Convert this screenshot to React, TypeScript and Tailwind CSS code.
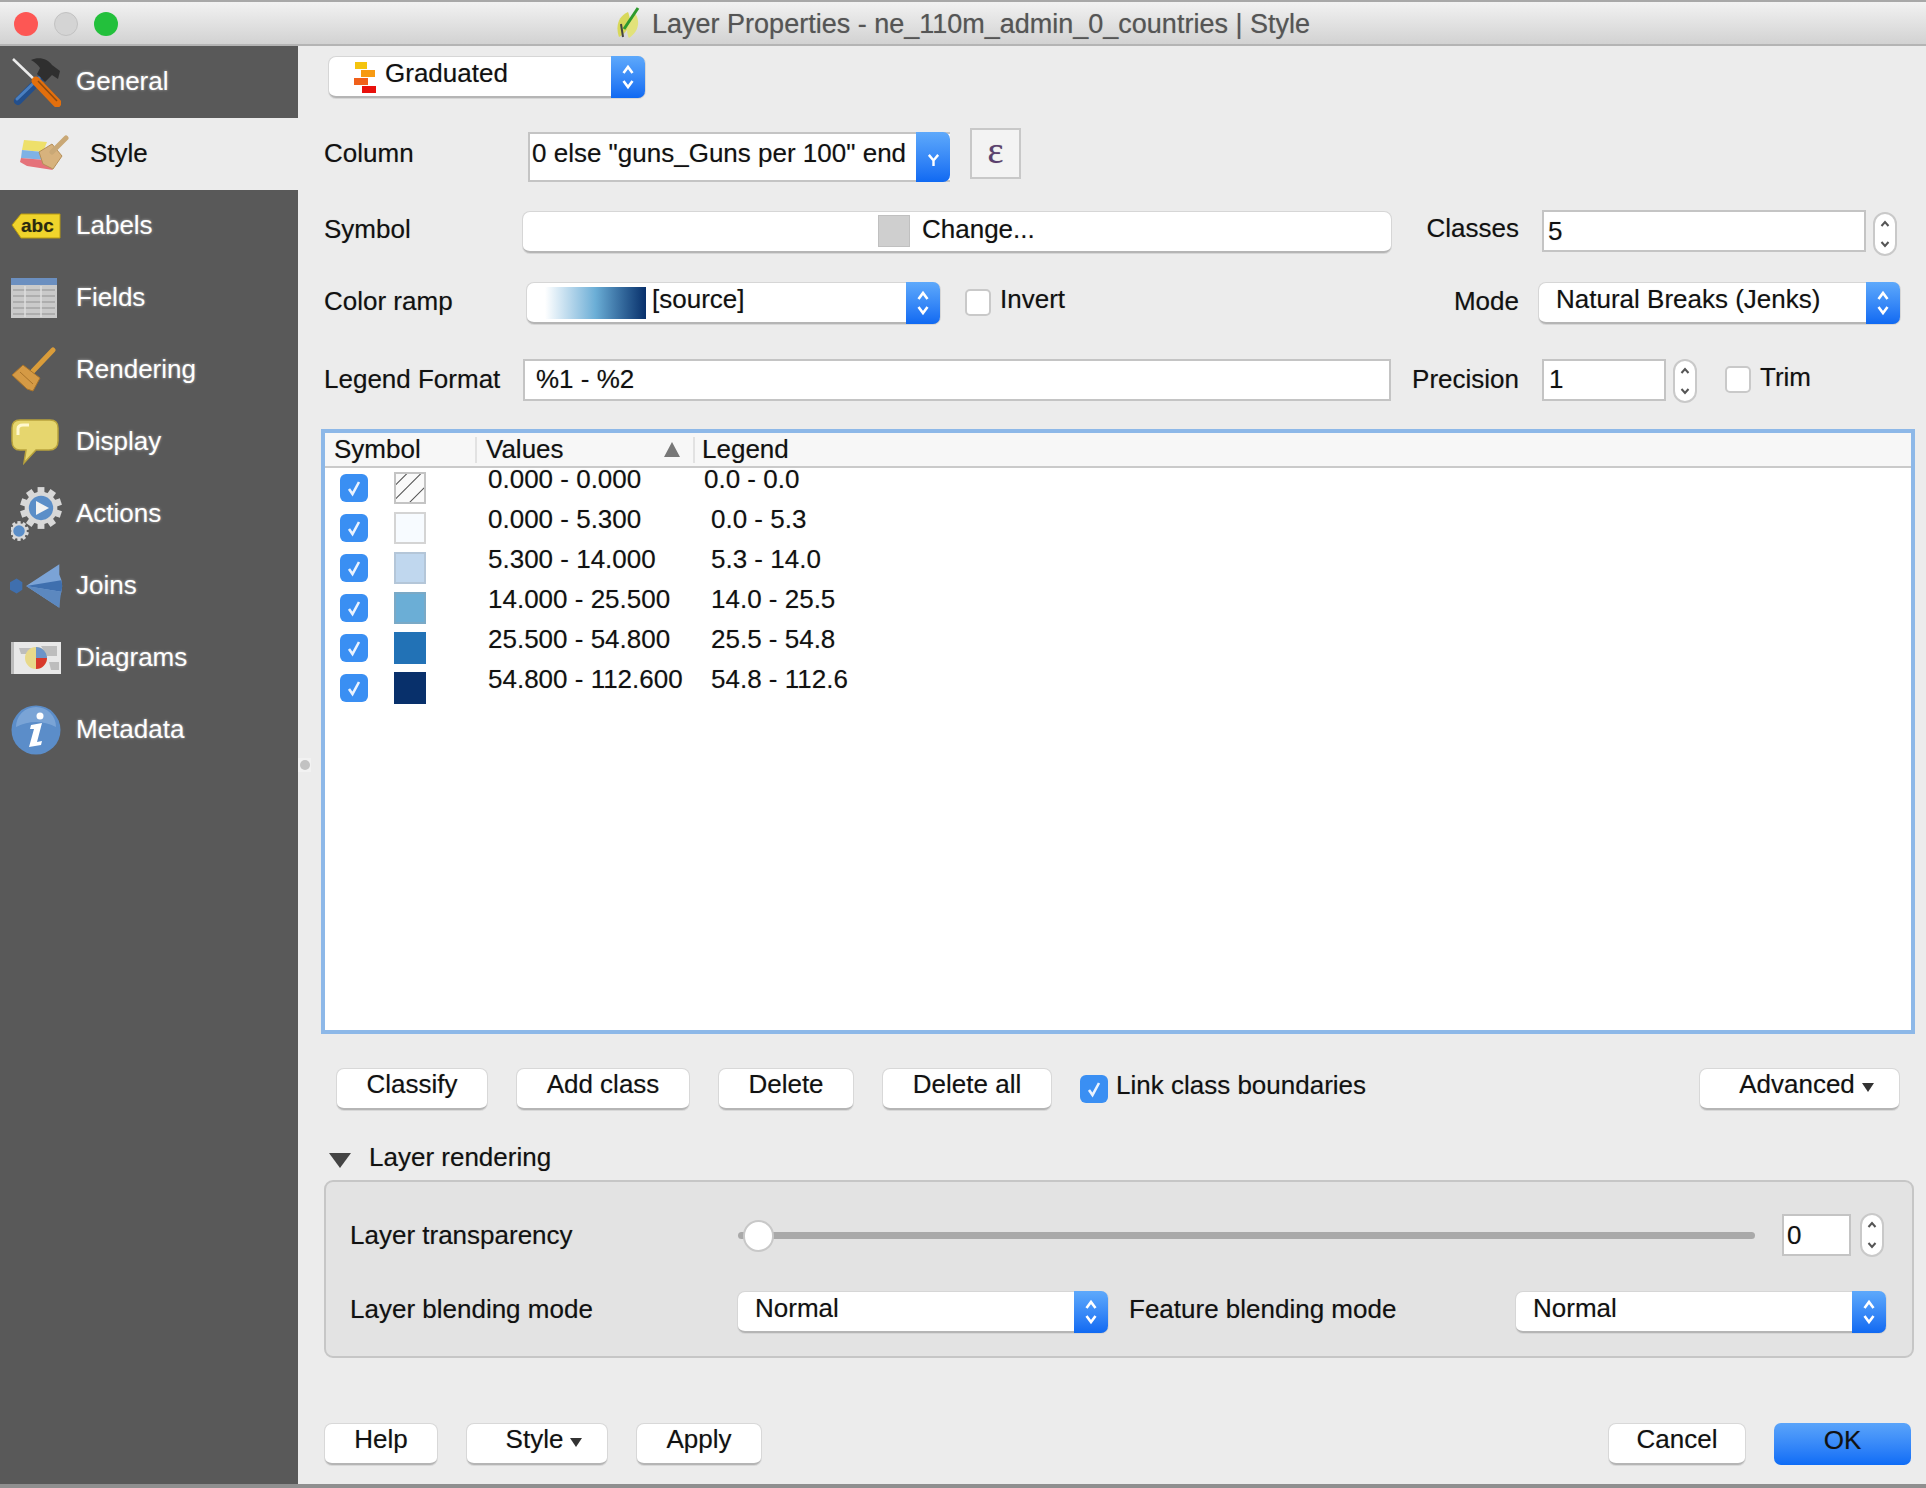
import type { ReactNode } from "react";

const sideItems = [
  { name: "General", icon: <GeneralIcon /> },
  { name: "Style", icon: <StyleIcon />, active: true },
  { name: "Labels", icon: <LabelsIcon /> },
  { name: "Fields", icon: <FieldsIcon /> },
  { name: "Rendering", icon: <BrushIcon /> },
  { name: "Display", icon: <DisplayIcon /> },
  { name: "Actions", icon: <ActionsIcon /> },
  { name: "Joins", icon: <JoinsIcon /> },
  { name: "Diagrams", icon: <DiagramsIcon /> },
  { name: "Metadata", icon: <MetadataIcon /> },
];

const classes = [
  { values: "0.000 - 0.000", legend: "0.0 - 0.0", swatch: "hatch", first: true },
  { values: "0.000 - 5.300", legend: "0.0 - 5.3", swatch: "bg-[#f7fbff] border-2 border-[#d4d4d4]" },
  { values: "5.300 - 14.000", legend: "5.3 - 14.0", swatch: "bg-[#c0d7ee] border-2 border-[#b4c6d8]" },
  { values: "14.000 - 25.500", legend: "14.0 - 25.5", swatch: "bg-[#6baed6] border-2 border-[#7aa9c6]" },
  { values: "25.500 - 54.800", legend: "25.5 - 54.8", swatch: "bg-[#2272b6]" },
  { values: "54.800 - 112.600", legend: "54.8 - 112.6", swatch: "bg-[#08306b]" },
];

function GeneralIcon() {
  return (
    <svg viewBox="0 0 50 50" className="w-[50px] h-[50px]">
      <line x1="31" y1="20" x2="7" y2="44" stroke="#234f8c" strokeWidth="8" strokeLinecap="round" />
      <line x1="29" y1="20" x2="6" y2="42" stroke="#4a7fc0" strokeWidth="3" strokeLinecap="round" />
      <path d="M20 3 C28 -1 37 2 41 8 L49 14 L47 22 L41 18 L34 25 L26 17 L29 11 C27 8 24 5 20 3Z" fill="#2f2f2f" />
      <line x1="2" y1="2" x2="26" y2="25" stroke="#ececec" strokeWidth="2.5" />
      <line x1="25" y1="24" x2="46" y2="46" stroke="#e36f0c" strokeWidth="9" strokeLinecap="round" />
      <line x1="27" y1="24" x2="46" y2="44" stroke="#8c4a10" strokeWidth="1.5" />
    </svg>
  );
}

function StyleIcon() {
  return (
    <svg viewBox="0 0 50 40" className="w-[50px] h-[40px]">
      <polygon points="5,6 28,8 24,18 3,16" fill="#eee06a" />
      <polygon points="3,16 24,18 26,26 2,24" fill="#7fb2e5" />
      <polygon points="2,24 26,26 34,36 8,32 1,28" fill="#e5727a" />
      <path d="M20 18 L33 10 L43 22 L34 35 L24 30 Z" fill="#d7b27d" stroke="#b58f58" strokeWidth="1" />
      <line x1="33" y1="18" x2="47" y2="4" stroke="#c9a876" strokeWidth="5" strokeLinecap="round" />
    </svg>
  );
}

function LabelsIcon() {
  return (
    <svg viewBox="0 0 50 30" className="w-[50px] h-[30px]">
      <path d="M1 14 L10 3 H49 V27 H10 Z" fill="#f0d42c" stroke="#b89a10" strokeWidth="1" />
      <text x="10" y="21" fontSize="19" fontWeight="700" fontFamily="Liberation Sans, sans-serif" fill="#2a2a10">abc</text>
    </svg>
  );
}

function FieldsIcon() {
  return (
    <svg viewBox="0 0 46 40" className="w-[46px] h-[40px]">
      <rect x="0" y="0" width="46" height="40" fill="#cacaca" />
      <rect x="0" y="0" width="46" height="7" fill="#6b8fc0" />
      {[12, 18, 24, 30, 36].map((y) => (
        <line key={y} x1="2" y1={y} x2="44" y2={y} stroke="#a4a4a4" strokeWidth="1.5" />
      ))}
      {[14, 30].map((x) => (
        <line key={x} x1={x} y1="8" x2={x} y2="39" stroke="#dedede" strokeWidth="1.5" />
      ))}
    </svg>
  );
}

function BrushIcon() {
  return (
    <svg viewBox="0 0 46 46" className="w-[46px] h-[46px]">
      <line x1="22" y1="24" x2="42" y2="3" stroke="#d99c3a" strokeWidth="5" strokeLinecap="round" />
      <path d="M12 18 L29 31 L22 44 L16 42 L1 28 Z" fill="#d59a45" stroke="#a8732a" strokeWidth="1" />
      <line x1="9" y1="25" x2="22" y2="37" stroke="#a8732a" strokeWidth="1" />
    </svg>
  );
}

function DisplayIcon() {
  return (
    <svg viewBox="0 0 48 46" className="w-[48px] h-[46px]">
      <path d="M9 1 H39 Q47 1 47 9 V22 Q47 31 38 31 H25 L13 44 L15 31 H9 Q1 31 1 22 V9 Q1 1 9 1Z" fill="#e6d66e" stroke="#b8a23c" strokeWidth="1.5" />
      <path d="M7 16 V10 Q7 6 12 6 H18" fill="none" stroke="#fff8cf" strokeWidth="3" />
    </svg>
  );
}

function Gear({ cx, cy, r, hub }: { cx: number; cy: number; r: number; hub: string }) {
  const teeth = Array.from({ length: 10 }, (_, i) => i * 36);
  return (
    <g>
      {teeth.map((a) => (
        <rect
          key={a}
          x={cx - r * 0.18}
          y={cy - r * 1.1}
          width={r * 0.36}
          height={r * 0.4}
          fill="#d8d8d8"
          transform={`rotate(${a} ${cx} ${cy})`}
        />
      ))}
      <circle cx={cx} cy={cy} r={r * 0.86} fill="#d8d8d8" />
      <circle cx={cx} cy={cy} r={r * 0.64} fill={hub} />
    </g>
  );
}

function ActionsIcon() {
  return (
    <svg viewBox="0 0 54 54" className="w-[54px] h-[54px]">
      <Gear cx={30} cy={21} r={19} hub="#5b8ec8" />
      <polygon points="25,14 38,21 25,28" fill="#f2f2f2" />
      <Gear cx={8} cy={44} r={9} hub="#5b8ec8" />
    </svg>
  );
}

function JoinsIcon() {
  return (
    <svg viewBox="0 0 58 48" className="w-[55px] h-[46px] -ml-[1px]">
      <polygon points="0,20 7,16 13,20 13,28 7,32 0,28" fill="#3f6fae" />
      <path d="M17 24 L52 1 V12 Q58 24 52 36 V47 Z" fill="#7ba3d6" />
      <path d="M17 24 L54 18 Q56 24 54 30 Z" fill="#3f6fae" />
      <path d="M17 24 L54 30 Q53 36 52 47 Z" fill="#5c88bf" />
    </svg>
  );
}

function DiagramsIcon() {
  return (
    <svg viewBox="0 0 50 32" className="w-[50px] h-[32px]">
      <rect x="0" y="0" width="50" height="32" fill="#e8e8e8" />
      <rect x="0" y="0" width="3" height="32" fill="#bcbcbc" />
      <path d="M8 6 H20 V12 H10 Z M30 4 H46 V14 H36 Z M38 20 H48 V28 H40 Z" fill="#bdbdbd" />
      <circle cx="25" cy="16" r="11" fill="#e8d98a" />
      <path d="M25 16 L25 5 A11 11 0 0 1 36 16 Z" fill="#6c94c9" />
      <path d="M25 16 L36 16 A11 11 0 0 1 25 27 Z" fill="#d8392c" />
    </svg>
  );
}

function MetadataIcon() {
  return (
    <svg viewBox="0 0 50 50" className="w-[50px] h-[50px]">
      <circle cx="25" cy="25" r="24.5" fill="#5b8dc9" />
      <path d="M5 22 A20 20 0 0 1 45 22 Q25 12 5 22Z" fill="#8fb4e0" opacity="0.6" />
      <circle cx="29" cy="11" r="3.5" fill="#fff" />
      <path d="M20 20 L31 18 L26 37 L31 36 L30 40 L18 42 L23 24 L19 24 Z" fill="#fff" />
    </svg>
  );
}

function Sidebar() {
  return (
    <div className="w-[298px] bg-[#595959] flex flex-col shrink-0">
      {sideItems.map((item) => (
        <div
          key={item.name}
          className={item.active ? "h-[72px] bg-[#ececec] flex items-center" : "h-[72px] flex items-center"}
        >
          <div className={item.active ? "w-[90px] pl-[19px] flex items-center" : "w-[76px] pl-[11px] flex items-center"}>
            {item.icon}
          </div>
          <span
            className={
              item.active
                ? "text-[26px] text-[#111] pb-[2px]"
                : "text-[26px] text-white pb-[2px] [text-shadow:0_0_3px_rgba(255,255,255,0.55)]"
            }
          >
            {item.name}
          </span>
        </div>
      ))}
    </div>
  );
}

function Updown({ className }: { className: string }) {
  return (
    <svg viewBox="0 0 14 26" className={className} fill="none" strokeWidth="2.6">
      <path d="M2.5 9 L7 3 L11.5 9" />
      <path d="M2.5 17 L7 23 L11.5 17" />
    </svg>
  );
}

function Combo({ width, children, textClass }: { width: string; children: ReactNode; textClass?: string }) {
  return (
    <div className={`${width} h-[41px] flex rounded-[7px] bg-white border-b-2 border-[#b5b5b5] shadow-[0_0_0_1px_#d6d6d6] shrink-0`}>
      <div className={`flex-1 flex items-center overflow-hidden pb-[6px] ${textClass ?? ""}`}>{children}</div>
      <div className="w-[34px] -mb-[2px] -mt-[1px] rounded-r-[7px] bg-gradient-to-b from-[#5ea9fb] to-[#0f69f2] flex items-center justify-center">
        <Updown className="w-[14px] h-[26px] stroke-white" />
      </div>
    </div>
  );
}

function Spin({ className }: { className?: string }) {
  return (
    <div className={`w-[24px] h-[44px] rounded-full bg-white border-2 border-[#c9c9c9] flex items-center justify-center shrink-0 ${className ?? ""}`}>
      <svg viewBox="0 0 12 30" className="w-[12px] h-[30px] stroke-[#555]" fill="none" strokeWidth="2">
        <path d="M2.5 7 L6 3 L9.5 7" />
        <path d="M2.5 23 L6 27 L9.5 23" />
      </svg>
    </div>
  );
}

function TextBox({ className, value }: { className: string; value: string }) {
  return (
    <div className={`h-[42px] bg-white border-2 border-[#c4c4c4] flex items-center text-[26px] shrink-0 ${className}`}>
      {value}
    </div>
  );
}

function BlueCheck({ className }: { className?: string }) {
  return (
    <div className={`w-[28px] h-[28px] rounded-[6px] bg-[#3a8ff3] flex items-center justify-center shrink-0 ${className ?? ""}`}>
      <svg viewBox="0 0 20 20" className="w-[20px] h-[20px]" fill="none" stroke="#eaf3ff" strokeWidth="2.6">
        <path d="M5 11 L8.5 16 L15 4" />
      </svg>
    </div>
  );
}

function EmptyCheck() {
  return <div className="w-[26px] h-[27px] rounded-[5px] bg-white border-2 border-[#c9c9c9] shrink-0" />;
}

function Btn({ className, children }: { className: string; children: ReactNode }) {
  return (
    <div className={`h-[41px] rounded-[7px] bg-white border-b-2 border-[#b5b5b5] shadow-[0_0_0_1px_#d8d8d8] flex items-center justify-center pb-[8px] text-[26px] shrink-0 ${className}`}>
      {children}
    </div>
  );
}

function Caret() {
  return <span className="ml-[7px] mt-[6px] w-0 h-0 border-x-[6px] border-x-transparent border-t-[9px] border-t-[#333]" />;
}

function Hatch() {
  return (
    <svg viewBox="0 0 32 32" className="w-[32px] h-[32px] border-2 border-[#c4c4c4] bg-[#fafafa]">
      <path d="M-2 14 L14 -2 M-2 30 L30 -2 M14 34 L34 14" stroke="#555" strokeWidth="1.2" />
    </svg>
  );
}

function LegendTable() {
  return (
    <div className="mt-[26px] ml-[23px] w-[1594px] h-[605px] border-[4px] border-[#8db8e8] bg-white flex flex-col">
      <div className="h-[35px] bg-[#f7f7f7] border-b-2 border-[#cacaca] flex items-center text-[26px] shrink-0">
        <div className="w-[152px] pl-[9px] border-r-2 border-[#e2e2e2] h-[26px] flex items-center">Symbol</div>
        <div className="w-[218px] pl-[9px] pr-[13px] border-r-2 border-[#e2e2e2] h-[26px] flex items-center justify-between">
          <span>Values</span>
          <span className="w-0 h-0 border-x-[8px] border-x-transparent border-b-[15px] border-b-[#777]" />
        </div>
        <div className="pl-[7px]">Legend</div>
      </div>
      {classes.map((row) => (
        <div key={row.values} className="h-[40px] flex items-center shrink-0 first:mt-[2px] text-[26px]">
          <BlueCheck className="ml-[15px]" />
          <div className={row.first ? "ml-[26px] w-[32px] h-[32px]" : `ml-[26px] w-[32px] h-[32px] ${row.swatch}`}>
            {row.first && <Hatch />}
          </div>
          <div className="ml-[62px] w-[216px] mb-[18px]">{row.values}</div>
          <div className={row.first ? "mb-[18px]" : "mb-[18px] pl-[7px]"}>{row.legend}</div>
        </div>
      ))}
    </div>
  );
}

function LayerRendering() {
  return (
    <div className="mt-[32px] ml-[26px]">
      <div className="flex items-center h-[25px] text-[26px]">
        <span className="ml-[5px] mt-[6px] w-0 h-0 border-x-[11px] border-x-transparent border-t-[15px] border-t-[#444]" />
        <span className="ml-[18px]">Layer rendering</span>
      </div>
      <div className="mt-[10px] w-[1590px] h-[178px] rounded-[9px] bg-[#e3e3e3] border-2 border-[#c6c6c6] pl-[24px] flex flex-col text-[26px]">
        <div className="mt-[31px] h-[44px] flex items-center">
          <span className="w-[388px]">Layer transparency</span>
          <div className="relative w-[1017px] h-[7px] rounded-full bg-[#a9a9a9]">
            <div className="absolute -top-[12px] left-[5px] w-[31px] h-[32px] rounded-full bg-white border-2 border-[#c8c8c8]" />
          </div>
          <TextBox className="ml-[27px] w-[69px] pl-[3px]" value="0" />
          <Spin className="ml-[9px]" />
        </div>
        <div className="mt-[33px] flex items-center">
          <span className="w-[388px] pb-[6px]">Layer blending mode</span>
          <Combo width="w-[370px]" textClass="pl-[17px]">Normal</Combo>
          <span className="ml-[21px] w-[387px] pb-[6px]">Feature blending mode</span>
          <Combo width="w-[370px]" textClass="pl-[17px]">Normal</Combo>
        </div>
      </div>
    </div>
  );
}

export default function App() {
  return (
    <div className="w-[1926px] h-[1488px] bg-[#ececec] flex flex-col font-['Liberation_Sans',Arial,sans-serif] text-[#111] [text-shadow:0_0_1px_rgba(0,0,0,0.3)] overflow-hidden">
      {/* Title bar */}
      <div className="relative h-[46px] shrink-0 border-t-2 border-b-2 border-t-[#a8a8a8] border-b-[#b4b4b4] bg-gradient-to-b from-[#f2f2f2] to-[#d2d2d2] flex items-center justify-center">
        <div className="absolute left-[14px] top-[10px] flex gap-[16px]">
          <span className="w-[24px] h-[24px] rounded-full bg-[#fd5754]" />
          <span className="w-[24px] h-[24px] rounded-full bg-[#d4d4d4] border border-[#c2c2c2]" />
          <span className="w-[24px] h-[24px] rounded-full bg-[#23c03c]" />
        </div>
        <svg viewBox="0 0 24 32" className="w-[24px] h-[32px] mr-[12px] shrink-0">
          <path d="M3 30 C-1 18 3 9 12 5 C16 14 13 25 3 30Z" fill="#d8d85a" />
          <path d="M13 31 C22 25 25 15 19 6 C12 13 9 24 13 31Z" fill="#e2e27a" />
          <path d="M8 22 L22 1" stroke="#2e9a2e" strokeWidth="3" fill="none" />
          <path d="M5 17 L7 30" stroke="#444" strokeWidth="2" fill="none" />
        </svg>
        <span className="text-[27px] text-[#555] pt-[3px]">Layer Properties - ne_110m_admin_0_countries | Style</span>
      </div>

      <div className="flex flex-1 min-h-0">
        <Sidebar />

        <div className="relative flex-1 flex flex-col">
          {/* splitter handle */}
          <div className="absolute left-0 top-[712px] w-[13px] h-[14px] bg-[#f2f2f2] flex items-center justify-center">
            <span className="w-[10px] h-[10px] rounded-full bg-[#c2c2c2]" />
          </div>

          {/* Renderer type */}
          <div className="mt-[11px] ml-[31px]">
            <Combo width="w-[316px]">
              <svg viewBox="0 0 24 32" className="ml-[24px] w-[24px] h-[32px] shrink-0 mt-[6px]">
                <rect x="2" y="1" width="12" height="7" fill="#f4c40e" />
                <rect x="8" y="9" width="14" height="7" fill="#f79a12" />
                <rect x="1" y="17" width="14" height="7" fill="#f0601a" />
                <rect x="9" y="25" width="14" height="7" fill="#e8100c" />
              </svg>
              <span className="ml-[8px] text-[26px]">Graduated</span>
            </Combo>
          </div>

          {/* Column */}
          <div className="mt-[30px] ml-[26px] h-[53px] flex items-center text-[26px]">
            <span className="w-[204px] pb-[2px]">Column</span>
            <div className="w-[422px] h-[50px] mt-[4px] flex bg-white border-2 border-[#c4c4c4] border-r-0">
              <div className="flex-1 flex items-center pl-[2px] pb-[6px] whitespace-nowrap overflow-hidden">
                0 else "guns_Guns per 100" end
              </div>
              <div className="w-[34px] -my-[2px] rounded-r-[7px] bg-gradient-to-b from-[#5ea9fb] to-[#0f69f2] flex items-end justify-center pb-[16px]">
                <svg viewBox="0 0 14 14" className="w-[13px] h-[13px]" fill="none" stroke="#ffffff" strokeWidth="2.6">
                  <path d="M2 2 L7 8 L12 2 M7 8 V14" />
                </svg>
              </div>
            </div>
            <div className="ml-[20px] w-[51px] h-[51px] mb-[2px] border-2 border-[#c8c8c8] bg-[#f3f3f3] flex items-center justify-center">
              <span className="font-['Liberation_Serif',serif] text-[38px] text-[#5a3f6e] pb-[6px]">ε</span>
            </div>
          </div>

          {/* Symbol + classes */}
          <div className="mt-[30px] ml-[26px] h-[45px] flex items-center text-[26px]">
            <span className="w-[199px] pb-[9px]">Symbol</span>
            <div className="relative w-[868px] h-[41px] mb-[3px] rounded-[7px] bg-white border-b-2 border-[#b5b5b5] shadow-[0_0_0_1px_#d6d6d6] flex items-center pl-[355px]">
              <span className="w-[32px] h-[32px] bg-[#cfcfcf] border border-[#c0c0c0]" />
              <span className="ml-[12px] pb-[4px]">Change...</span>
            </div>
            <span className="w-[128px] text-right pb-[10px]">Classes</span>
            <TextBox className="ml-[23px] w-[324px] pl-[4px] mb-[5px]" value="5" />
            <Spin className="ml-[7px]" />
          </div>

          {/* Color ramp + mode */}
          <div className="mt-[27px] ml-[26px] h-[41px] flex items-center text-[26px]">
            <span className="w-[203px] pb-[4px]">Color ramp</span>
            <Combo width="w-[413px]">
              <div className="ml-[18px] mt-[6px] w-[101px] h-[32px] shrink-0 bg-gradient-to-r from-[#ffffff] via-[#6baed6] to-[#08306b]" />
              <span className="ml-[6px] text-[26px]">[source]</span>
            </Combo>
            <div className="ml-[25px] mb-[2px]"><EmptyCheck /></div>
            <span className="ml-[9px] pb-[8px] w-[391px]">Invert</span>
            <span className="w-[128px] text-right pb-[4px]">Mode</span>
            <span className="ml-[20px]" />
            <Combo width="w-[361px]" textClass="pl-[17px]">Natural Breaks (Jenks)</Combo>
          </div>

          {/* Legend format + precision */}
          <div className="mt-[35px] ml-[26px] h-[44px] flex items-center text-[26px]">
            <span className="w-[199px] pb-[4px]">Legend Format</span>
            <TextBox className="w-[868px] pl-[11px] mb-[3px]" value="%1 - %2" />
            <span className="w-[128px] text-right pb-[4px]">Precision</span>
            <TextBox className="ml-[23px] w-[124px] pl-[5px] mb-[3px]" value="1" />
            <Spin className="ml-[7px]" />
            <div className="ml-[28px] mb-[4px]"><EmptyCheck /></div>
            <span className="ml-[9px] pb-[8px]">Trim</span>
          </div>

          <LegendTable />

          {/* Class buttons */}
          <div className="mt-[32px] ml-[39px] w-[1562px] flex items-center text-[26px]">
            <Btn className="w-[150px]">Classify</Btn>
            <Btn className="ml-[30px] w-[172px]">Add class</Btn>
            <Btn className="ml-[30px] w-[134px]">Delete</Btn>
            <Btn className="ml-[30px] w-[168px]">Delete all</Btn>
            <BlueCheck className="ml-[29px] mb-[2px]" />
            <span className="ml-[8px] pb-[8px]">Link class boundaries</span>
            <Btn className="ml-auto w-[199px]">
              <span className="ml-[14px]">Advanced</span>
              <Caret />
            </Btn>
          </div>

          <LayerRendering />

          {/* Dialog buttons */}
          <div className="mt-[65px] ml-[27px] w-[1586px] flex items-center">
            <Btn className="w-[112px]">Help</Btn>
            <Btn className="ml-[30px] w-[140px]">
              <span className="ml-[14px]">Style</span>
              <Caret />
            </Btn>
            <Btn className="ml-[30px] w-[124px]">Apply</Btn>
            <Btn className="ml-auto w-[136px]">Cancel</Btn>
            <div className="ml-[29px] w-[137px] h-[42px] rounded-[7px] bg-gradient-to-b from-[#5aa4fa] to-[#0d6cf6] flex items-center justify-center pb-[8px] text-[26px]">
              OK
            </div>
          </div>
        </div>
      </div>
      <div className="h-[4px] shrink-0 bg-[#8f8f8f]" />
    </div>
  );
}
